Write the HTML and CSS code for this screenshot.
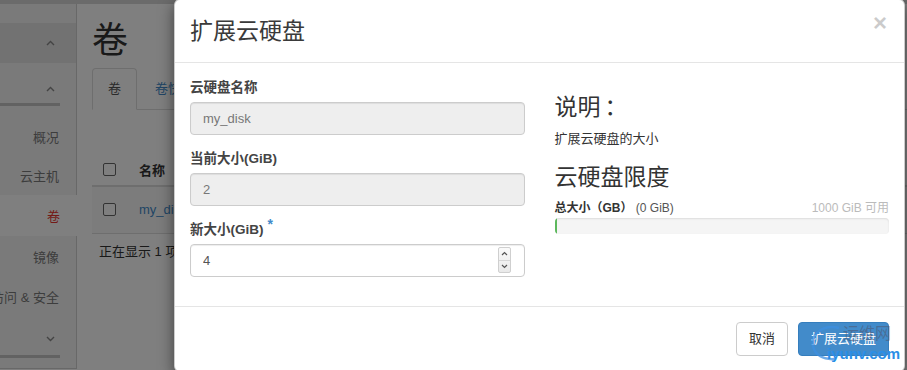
FILE: index.html
```html
<!DOCTYPE html>
<html lang="zh-CN">
<head>
<meta charset="utf-8">
<title>扩展云硬盘</title>
<link rel="stylesheet" href="styles.css">
</head>
<body>
<div class="page">
  <div class="topbar"></div>
  <div class="main">
    <nav class="sidebar">
      <div class="sb-block sb-top">
        <div class="sb-spacer"></div>
        <div class="sb-head"><svg class="caret" width="9" height="6" viewBox="0 0 9 6"><polyline points="1,5 4.5,1.5 8,5" fill="none" stroke="#888" stroke-width="1.4"/></svg></div>
        <div class="sb-sub up"><svg class="caret" width="9" height="6" viewBox="0 0 9 6"><polyline points="1,5 4.5,1.5 8,5" fill="none" stroke="#888" stroke-width="1.4"/></svg></div>
        <div class="sb-rule"></div>
        <a class="sb-item first">概况</a>
        <a class="sb-item last">云主机</a>
      </div>
      <a class="sb-item active">卷</a>
      <div class="sb-block sb-bottom">
        <a class="sb-item">镜像</a>
        <a class="sb-item">访问 &amp; 安全</a>
        <div class="sb-sub down"><svg class="caret" width="9" height="6" viewBox="0 0 9 6"><polyline points="1,1 4.5,4.5 8,1" fill="none" stroke="#888" stroke-width="1.4"/></svg></div>
        <div class="sb-rule"></div>
      </div>
    </nav>
    <section class="content">
      <h1 class="page-title">卷</h1>
      <ul class="tabs">
        <li class="tab active">卷</li>
        <li class="tab"><a class="link">卷快照</a></li>
      </ul>
      <table class="table">
        <colgroup><col class="c-check"><col></colgroup>
        <thead>
          <tr><th><span class="checkbox"></span></th><th>名称</th></tr>
        </thead>
        <tbody>
          <tr><td><span class="checkbox"></span></td><td><a class="link">my_disk</a></td></tr>
        </tbody>
      </table>
      <div class="count">正在显示 1 项</div>
    </section>
  </div>
</div>

<div class="backdrop"></div>

<div class="modal">
  <div class="modal-header">
    <h3 class="modal-title">扩展云硬盘</h3>
    <span class="close">×</span>
  </div>
  <div class="modal-body">
    <div class="col-left">
      <div class="form-group">
        <label class="label">云硬盘名称</label>
        <input class="input" type="text" value="my_disk" disabled>
      </div>
      <div class="form-group">
        <label class="label">当前大小(GiB)</label>
        <input class="input" type="text" value="2" disabled>
      </div>
      <div class="form-group">
        <label class="label">新大小(GiB)<span class="req">*</span></label>
        <div class="num">
          <input class="input" type="text" value="4">
          <div class="spinner">
            <span class="spin up"><svg width="7" height="5" viewBox="0 0 7 5"><polyline points="1,4 3.5,1.5 6,4" fill="none" stroke="#555" stroke-width="1.2"/></svg></span>
            <span class="spin dn"><svg width="7" height="5" viewBox="0 0 7 5"><polyline points="1,1 3.5,3.5 6,1" fill="none" stroke="#555" stroke-width="1.2"/></svg></span>
          </div>
        </div>
      </div>
    </div>
    <div class="col-right">
      <h3 class="sub-title">说明<span class="colon">：</span></h3>
      <p class="desc">扩展云硬盘的大小</p>
      <h3 class="sub-title">云硬盘限度</h3>
      <div class="quota-label">
        <span><strong>总大小（GB）</strong> <span class="used">(0 GiB)</span></span>
        <span class="avail">1000 GiB 可用</span>
      </div>
      <div class="progress"><div class="bar" style="width:2px"></div></div>
    </div>
  </div>
  <div class="modal-footer">
    <button class="btn btn-default">取消</button>
    <button class="btn btn-primary">扩展云硬盘</button>
  </div>
  <div class="watermark">
    <svg class="wm-arc" width="34" height="38" viewBox="0 0 34 38"><path d="M30 4 C14 0 2 10 4 22 C6 31 14 36 26 35" fill="none" stroke="#3d8fe0" stroke-width="2.5" opacity="0.75"/></svg>
    <span class="wm-cn">运维网</span>
    <span class="wm-en">iyunv.com</span>
  </div>
</div>
</body>
</html>
```

FILE: styles.css
```css
* { box-sizing: border-box; }
html, body { margin: 0; padding: 0; }
body {
  width: 907px;
  height: 370px;
  overflow: hidden;
  position: relative;
  font-family: "Liberation Sans", "Noto Sans CJK SC", sans-serif;
  font-size: 13px;
  color: #333;
  background: #fff;
  text-spacing-trim: space-all;
}

/* ---------- underlying page ---------- */
.page { display: flex; flex-direction: column; height: 370px; }
.topbar { height: 4px; flex: none; background: #d6d6d6; }
.main { display: flex; flex: 1; min-height: 0; }

.sidebar { width: 77px; flex: none; display: flex; flex-direction: column; }
.sb-block { background: #f4f4f4; border-right: 1px solid #d0d0d0; }
.sb-spacer { height: 19px; }
.sb-head {
  height: 40px; background: #e4e4e4;
  display: flex; align-items: center; justify-content: flex-end; padding-right: 21px;
}
.sb-sub {
  height: 40px;
  display: flex; align-items: center; justify-content: flex-end; padding-right: 21px;
}
.sb-sub.up { padding-top: 12px; }
.sb-sub.down { height: 39px; padding-top: 6px; }
.sb-rule { height: 3px; width: 60px; background: #c4c4c4; }
.sb-item {
  height: 40px; display: flex; align-items: center; justify-content: flex-end;
  padding-right: 17px; white-space: nowrap; color: #7a7a7a; font-size: 13px;
}
.sb-item.first { margin-top: 10px; }
.sb-item.last { height: 39px; }
.sb-item.active { height: 41px; background: #fff; color: #e8352f; }
.sb-bottom { height: 133px; flex: none; border-bottom: 1px solid #d0d0d0; }

.content { flex: 1; min-width: 0; padding-left: 15px; }
.page-title {
  margin: 17px 0 7px; font-size: 36px; line-height: 40px; font-weight: normal; color: #333;
}
.tabs {
  list-style: none; margin: 0; padding: 0; display: flex;
  border-bottom: 1px solid #ddd; height: 42px;
}
.tab { padding: 10px 15px; line-height: 20px; margin-right: 2px; border: 1px solid transparent; border-radius: 4px 4px 0 0; }
.tab.active { border-color: #ddd; border-bottom-color: #fff; background: #fff; color: #555; height: 42px; }
.link { color: #428bca; text-decoration: none; }

.table { width: 100%; border-collapse: collapse; table-layout: fixed; margin-top: 44px; }
.c-check { width: 39px; }
.table th { height: 32px; padding: 0 8px; text-align: left; font-weight: bold; border-bottom: 2px solid #ddd; }
.table td { height: 47px; padding: 0 8px; border-bottom: 1px solid #ddd; background: #f9f9f9; }
.checkbox {
  display: block; width: 13px; height: 13px; margin-left: 3px;
  border: 1px solid #666; border-radius: 2px; background: #fff;
}
.count { padding: 9px 7px; line-height: 18px; color: #333; }

.backdrop { position: absolute; inset: 0; background: rgba(0, 0, 0, 0.5); z-index: 1; }

/* ---------- modal ---------- */
.modal {
  position: absolute; top: -1px; left: 174px; width: 731px;
  background: #fff; border: 1px solid rgba(0, 0, 0, 0.2); border-radius: 6px;
  box-shadow: 0 5px 15px rgba(0, 0, 0, 0.5);
  z-index: 2;
}
.modal-header {
  display: flex; justify-content: space-between; align-items: flex-start;
  padding: 15px; border-bottom: 1px solid #e5e5e5;
}
.modal-title { margin: 0; font-size: 23px; line-height: 32px; font-weight: normal; color: #3a3a3a; }
.close {
  font-family: "Liberation Sans", sans-serif;
  font-size: 24px; font-weight: bold; line-height: 1; color: #000; opacity: 0.2;
  margin-top: -4px; margin-right: 2px;
}

.modal-body { display: grid; grid-template-columns: 1fr 1fr; column-gap: 30px; padding: 15px; }
.form-group { margin-bottom: 14px; }
.label { display: block; font-size: 13.5px; font-weight: bold; line-height: 20px; height: 20px; margin-bottom: 4px; color: #444; }
.req { color: #428bca; font-size: 14px; line-height: 0; position: relative; top: -5px; margin-left: 4px; }
.input {
  display: block; width: 100%; height: 33px; padding: 6px 12px;
  font-family: inherit; font-size: 13px; color: #555;
  border: 1px solid #ccc; border-radius: 4px; background: #fff;
  box-shadow: inset 0 1px 1px rgba(0, 0, 0, 0.075); outline: none;
}
.input:disabled { background: #eee; color: #777; }
.num { position: relative; }
.spinner {
  position: absolute; right: 14px; top: 3px; width: 13px; height: 26px;
  display: flex; flex-direction: column; border: 1px solid #cfcfcf; border-radius: 2px;
  background: linear-gradient(#fafafa, #e9e9e9);
}
.spin { flex: 1; display: flex; align-items: center; justify-content: center; }
.spin.up { border-bottom: 1px solid #d6d6d6; }

.sub-title { margin: 16px 0 10px; font-size: 23px; line-height: 26px; font-weight: normal; color: #333; }
.colon { margin-left: 4px; }
.desc { margin: 0 0 10px; font-size: 13px; line-height: 18px; color: #333; }
.quota-label { display: flex; justify-content: space-between; font-size: 12px; line-height: 17px; }
.quota-label strong { color: #333; }
.used { color: #555; }
.avail { color: #bbb; }
.progress {
  margin-top: 1px; height: 16px; border-radius: 4px; background: #f5f5f5; overflow: hidden;
  box-shadow: inset 0 1px 2px rgba(0, 0, 0, 0.1);
}
.bar { height: 100%; background: #5cb85c; }

.modal-footer {
  display: flex; justify-content: flex-end; gap: 10px;
  padding: 15px; border-top: 1px solid #e5e5e5;
}
.btn {
  font-family: inherit; font-size: 13px; line-height: 20px; padding: 6px 12px;
  border: 1px solid #ccc; border-radius: 4px; background: #fff; color: #333;
}
.btn-primary { background: #428bca; border-color: #357ebd; color: #fff; }

.watermark { position: absolute; left: 634px; top: 322px; width: 94px; height: 44px; pointer-events: none; }
.wm-arc { position: absolute; left: 0; top: 2px; }
.wm-cn { position: absolute; left: 34px; top: 2px; font-size: 16px; line-height: 20px; color: rgba(80, 80, 100, 0.5); }
.wm-en { position: absolute; left: 18px; top: 23px; font-size: 15px; line-height: 18px; font-weight: bold; color: #2a8ee6; }
```
